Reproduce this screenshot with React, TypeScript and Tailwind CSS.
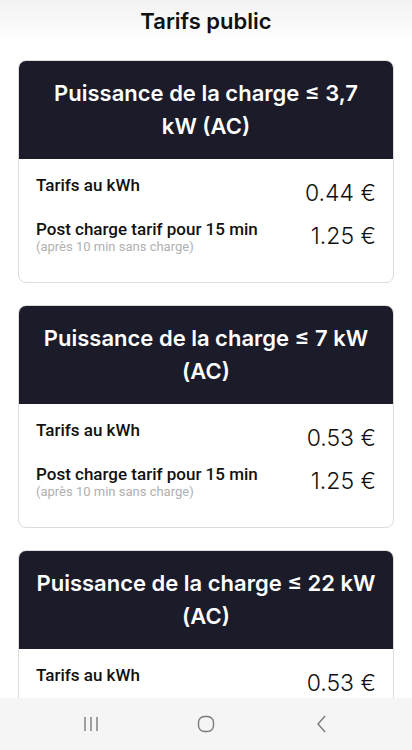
const tarifs = [
  { id: 1, title: "Puissance de la charge ≤ 3,7 kW (AC)", kwh: "0.44 €", post: "1.25 €" },
  { id: 2, title: "Puissance de la charge ≤ 7 kW (AC)", kwh: "0.53 €", post: "1.25 €" },
  { id: 3, title: "Puissance de la charge ≤ 22 kW (AC)", kwh: "0.53 €", post: "1.25 €" },
];

function TarifCard({ title, kwh, post }: { title: string; kwh: string; post: string }) {
  return (
    <div className="rounded-lg border border-[#dcdcdc] bg-white overflow-hidden">
      <div className="bg-[#1b1b2a] px-4 py-[16px] text-center text-[22px] leading-[33px] font-semibold text-white font-['Inter',sans-serif]">
        {title}
      </div>
      <div className="px-[17px] pt-4 pb-[27px] font-['Roboto',sans-serif]">
        <div className="flex justify-between items-start">
          <span className="text-[17px] leading-5 font-medium text-[#111]">Tarifs au kWh</span>
          <span className="mt-1 text-[23px] leading-7 font-light text-[#111] font-['Inter',sans-serif]">{kwh}</span>
        </div>
        <div className="mt-3 flex justify-between items-start">
          <div className="flex flex-col">
            <span className="text-[17px] leading-5 font-medium text-[#111]">Post charge tarif pour 15 min</span>
            <span className="text-[13px] leading-4 text-[#b0b0b0]">(après 10 min sans charge)</span>
          </div>
          <span className="mt-[3px] text-[23px] leading-7 font-light text-[#111] font-['Inter',sans-serif]">{post}</span>
        </div>
      </div>
    </div>
  );
}

export default function App() {
  return (
    <div className="relative h-[750px] w-[412px] overflow-hidden bg-white">
      <div className="h-[42px] flex items-center justify-center bg-gradient-to-b from-[#f2f2f2] to-white">
        <h1 className="text-[22px] font-semibold text-[#111] font-['Inter',sans-serif]">Tarifs public</h1>
      </div>
      <div className="flex flex-col gap-[22px] px-[18px] pt-[18px]">
        {tarifs.map((t) => (
          <TarifCard key={t.id} title={t.title} kwh={t.kwh} post={t.post} />
        ))}
      </div>
      {/* android nav bar */}
      <div className="absolute bottom-0 left-0 right-0 h-[52px] bg-[#f5f5f5] grid grid-cols-3 place-items-center px-[34px] text-[#7a7a7a]">
        <svg width="20" height="18" viewBox="0 0 20 18" fill="none" stroke="currentColor" strokeWidth="1.4">
          <path d="M4 2v14M10 2v14M16 2v14" />
        </svg>
        <svg width="20" height="20" viewBox="0 0 20 20" fill="none" stroke="currentColor" strokeWidth="1.4">
          <rect x="2.5" y="2.5" width="15" height="15" rx="6" />
        </svg>
        <svg width="14" height="20" viewBox="0 0 14 20" fill="none" stroke="currentColor" strokeWidth="1.4">
          <path d="M11 2l-7 8 7 8" />
        </svg>
      </div>
    </div>
  );
}
